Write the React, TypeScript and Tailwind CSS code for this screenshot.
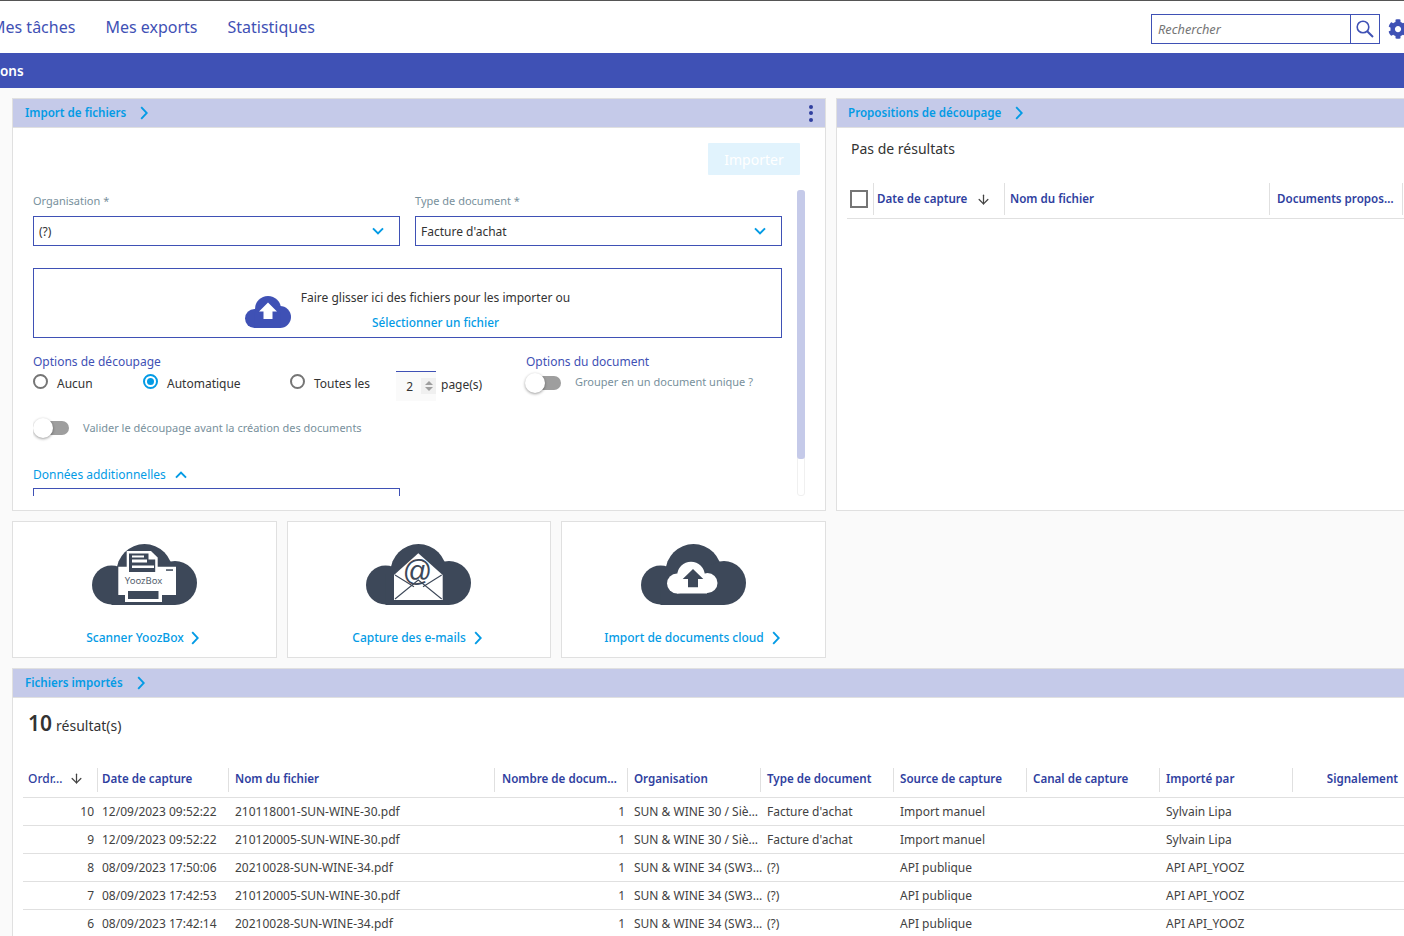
import React from "react";
import { ArrowDown } from "lucide-react";
import { FaCog } from "react-icons/fa";

function CloudBase() {
  return (
    <g fill="#3d4859">
      <circle cx="19.5" cy="41" r="19.5" />
      <circle cx="52.5" cy="28" r="28" />
      <circle cx="83" cy="39" r="22" />
      <rect x="19.5" y="30" width="63.5" height="31" />
    </g>
  );
}

function ChevronRight({ className = "" }: { className?: string }) {
  return (
    <svg width="8" height="14" viewBox="0 0 8 14" fill="none" className={className}>
      <path d="M1.2 1.2 6.8 7 1.2 12.8" stroke="#039be5" strokeWidth="1.9" />
    </svg>
  );
}

function ChevronV({ up = false }: { up?: boolean }) {
  return (
    <svg width="12" height="8" viewBox="0 0 12 8" fill="none">
      <path d={up ? "M1 6.6 6 1.6 11 6.6" : "M1 1.4 6 6.4 11 1.4"} stroke="#039be5" strokeWidth="2" />
    </svg>
  );
}

function PanelHeader({ title, gap, menu, pad = "pl-3" }: { title: string; gap: string; menu?: boolean; pad?: string }) {
  return (
    <div className={`flex h-[29px] shrink-0 items-center border-b border-[#e0e0e0] bg-[#c5cae9] pr-3 ${pad}`}>
      <span className="text-[11.6px] font-semibold text-[#039be5]">{title}</span>
      <ChevronRight className={gap} />
      {menu && (
        <span className="ml-auto flex flex-col gap-[2.5px] pr-[0.5px]">
          <i className="block h-[4px] w-[4px] rounded-full bg-[#303f9f]" />
          <i className="block h-[4px] w-[4px] rounded-full bg-[#303f9f]" />
          <i className="block h-[4px] w-[4px] rounded-full bg-[#303f9f]" />
        </span>
      )}
    </div>
  );
}

function Field({ label, value }: { label: string; value: string }) {
  return (
    <div className="w-[367px]">
      <div className="mb-[7px] h-[16px] text-[11px] leading-[16px] text-[#78909c]">{label}</div>
      <div className="flex h-[30px] items-center justify-between border border-[#3f51b5] pl-[5px] pr-[15px] text-[12px] text-[#333]">
        <span className="pt-[1px]">{value}</span>
        <ChevronV />
      </div>
    </div>
  );
}

function Radio({ label, on, className }: { label: string; on?: boolean; className: string }) {
  return (
    <div className={`flex items-start ${className}`}>
      <span className={`mt-[0.5px] flex h-[15px] w-[15px] items-center justify-center rounded-full border-2 ${on ? "border-[#039be5]" : "border-[#757575]"}`}>
        {on && <i className="block h-[7px] w-[7px] rounded-full bg-[#039be5]" />}
      </span>
      <span className="ml-[9px] mt-[2px] text-[12px] leading-[18px] text-[#333]">{label}</span>
    </div>
  );
}

function Toggle() {
  return (
    <span className="relative block h-[20px] w-[36px] shrink-0">
      <i className="absolute left-[9px] top-[3px] block h-[14px] w-[27px] rounded-full bg-[#9e9e9e]" />
      <i className="absolute left-0 top-0 block h-[20px] w-[20px] rounded-full bg-white shadow-[0_1px_3px_rgba(0,0,0,0.4)]" />
    </span>
  );
}

function CloudUpload() {
  return (
    <svg width="105" height="61" viewBox="0 0 105 61">
      <CloudBase />
      <g fill="#fff">
        <circle cx="36" cy="39.5" r="10" />
        <circle cx="50" cy="31.5" r="13.8" />
        <circle cx="66.5" cy="39" r="10" />
        <rect x="36" y="32" width="30" height="17.5" />
      </g>
      <path d="M52 25 62.3 35H57V43.3H47V35H41.7Z" fill="#3d4859" />
    </svg>
  );
}

function CloudMail() {
  return (
    <svg width="105" height="61" viewBox="0 0 105 61" className="mr-[2px]">
      <CloudBase />
      <path d="M28 31 52.3 9.3 76.7 31V56H28Z" fill="#fff" />
      <path d="M29 31 48 42.7M75.7 31 57 42.7M29 55 52.3 36 75.7 55" fill="none" stroke="#3d4859" strokeWidth="1.1" />
      <text x="51" y="36.5" textAnchor="middle" fontFamily="'Liberation Sans', sans-serif" fontStyle="italic" fontSize="29" fill="#3d4859">@</text>
    </svg>
  );
}

function CloudBox() {
  return (
    <svg width="105" height="61" viewBox="0 0 105 61">
      <CloudBase />
      <path d="M26.3 22.7H84V51H26.3Z" fill="#fff" />
      <path d="M74 25.3H81V26.8H74Z" fill="#3d4859" />
      <path d="M34.7 29V7H59L65.7 13.5V29Z" fill="#fff" />
      <path d="M37 28V9.5H56.5V15.5H63.2V28Z" fill="#3d4859" />
      <path d="M40 15.5H55V18.5H40ZM40 21.5H62V24H40ZM40 11.5H52V13.5H40Z" fill="#fff" />
      <path d="M33 46H70V58H33Z" fill="#fff" />
      <path d="M36 47H66.5V55H36Z" fill="#3d4859" />
      <text x="51.5" y="39.5" textAnchor="middle" fontFamily="'Noto Sans', sans-serif" fontSize="9.5" fill="#555f6e">YoozBox</text>
    </svg>
  );
}

function Card({ title, icon, w, gap, pad }: { title: string; icon: React.ReactNode; w: string; gap: string; pad: string }) {
  return (
    <div className={`flex flex-col items-center border border-[#e0e0e0] bg-white pt-[22px] ${w}`}>
      {icon}
      <div className={`mt-[24px] flex items-center ${pad}`}>
        <span className="text-[12px] font-medium text-[#039be5]">{title}</span>
        <ChevronRight className={gap} />
      </div>
    </div>
  );
}

const gridCols = "grid grid-cols-[74px_131px_266px_133px_133px_133px_133px_133px_133px_112px]";

const headers: [string, string][] = [
  ["Date de capture", "pl-[4px]"],
  ["Nom du fichier", "pl-[6px]"],
  ["Nombre de docum…", "pl-[7px]"],
  ["Organisation", "pl-[6px]"],
  ["Type de document", "pl-[6px]"],
  ["Source de capture", "pl-[6px]"],
  ["Canal de capture", "pl-[6px]"],
  ["Importé par", "pl-[6px]"],
];

const rows = [
  ["10", "12/09/2023 09:52:22", "210118001-SUN-WINE-30.pdf", "SUN & WINE 30 / Siè…", "Facture d'achat", "Import manuel", "Sylvain Lipa"],
  ["9", "12/09/2023 09:52:22", "210120005-SUN-WINE-30.pdf", "SUN & WINE 30 / Siè…", "Facture d'achat", "Import manuel", "Sylvain Lipa"],
  ["8", "08/09/2023 17:50:06", "20210028-SUN-WINE-34.pdf", "SUN & WINE 34 (SW3…", "(?)", "API publique", "API API_YOOZ"],
  ["7", "08/09/2023 17:42:53", "210120005-SUN-WINE-30.pdf", "SUN & WINE 34 (SW3…", "(?)", "API publique", "API API_YOOZ"],
  ["6", "08/09/2023 17:42:14", "20210028-SUN-WINE-34.pdf", "SUN & WINE 34 (SW3…", "(?)", "API publique", "API API_YOOZ"],
];

export default function App() {
  return (
    <div className="flex h-[936px] w-[1404px] flex-col overflow-hidden bg-[#fafafa] font-['Noto_Sans',sans-serif]">
      <header className="flex h-[53px] shrink-0 items-center border-t border-[#555] bg-white">
        <nav className="-ml-[9px] flex gap-[30px] text-[16px] text-[#3f51b5]">
          <span>Mes tâches</span>
          <span>Mes exports</span>
          <span>Statistiques</span>
        </nav>
        <div className="ml-auto mt-[4px] flex items-center">
          <div className="flex h-[30px] w-[229px] border border-[#3f51b5]">
            <span className="flex-1 pl-[6px] text-[12.8px] italic leading-[28px] text-[#757575]">Rechercher</span>
            <span className="flex w-[29px] items-center justify-center border-l border-[#3f51b5]">
              <svg width="18" height="18" viewBox="0 0 18 18" fill="none" stroke="#3f51b5" strokeWidth="1.6">
                <circle cx="7" cy="7" r="5.8" />
                <path d="M11.2 11.2 17 17" strokeWidth="2" />
              </svg>
            </span>
          </div>
          <FaCog size={20} color="#3f51b5" className="ml-[8px] -mr-[4px]" />
        </div>
      </header>

      <div className="flex h-[35px] shrink-0 items-center bg-[#3f51b5] pt-[2px] text-[13.5px] font-semibold text-white">ons</div>

      <main className="flex flex-col gap-[10px] pl-[12px] pt-[10px]">
        <div className="flex gap-[10px]">
          <div className="flex w-[814px] shrink-0 flex-col gap-[10px]">
            <section className="flex h-[413px] flex-col border border-[#e0e0e0] bg-white">
              <PanelHeader title="Import de fichiers" gap="ml-[14px]" menu />
              <div className="flex justify-end pr-[25px] pt-[15px]">
                <span className="flex h-[32px] w-[92px] items-center justify-center rounded-[1px] bg-[#e1f3fd] text-[14px] text-white">Importer</span>
              </div>
              <div className="flex h-[306px] pl-[20px] pt-[15px]">
                <div className="h-[306px] w-[749px] overflow-hidden pt-[3px]">
                  <div className="flex justify-between">
                    <Field label="Organisation *" value="(?)" />
                    <Field label="Type de document *" value="Facture d'achat" />
                  </div>
                  <div className="mt-[22px] flex h-[70px] items-start justify-center border border-[#3f51b5]">
                    <svg width="46" height="32" viewBox="0 0 46 32" className="mt-[27px]">
                      <g fill="#3f51b5">
                        <circle cx="9.5" cy="22.5" r="9.5" />
                        <circle cx="23" cy="13" r="13" />
                        <circle cx="35" cy="21" r="11" />
                        <rect x="9.5" y="16" width="26" height="16" />
                      </g>
                      <path d="M23 6.5 32 15.5H27.5V23H18.5V15.5H14Z" fill="#fff" />
                    </svg>
                    <div className="ml-[10px] flex flex-col items-center pt-[20px] text-[12px]">
                      <span className="leading-[18px] text-[#333]">Faire glisser ici des fichiers pour les importer ou</span>
                      <span className="mt-[6px] text-[11.8px] font-medium leading-[18px] text-[#039be5]">Sélectionner un fichier</span>
                    </div>
                  </div>
                  <div className="mt-[15px] flex">
                    <div className="w-[493px] shrink-0">
                      <div className="text-[12px] leading-[17px] text-[#3f51b5]">Options de découpage</div>
                      <div className="flex h-[30px] items-start">
                        <Radio label="Aucun" className="mt-[3px] w-[110px]" />
                        <Radio on label="Automatique" className="mt-[3px] w-[147px]" />
                        <Radio label="Toutes les" className="mt-[3px] w-[106px]" />
                        <div className="mt-[1px] flex h-[30px] w-[40px] border-t border-[#3f51b5] bg-[#fafafa]">
                          <span className="w-[25px] pr-[8px] text-right text-[12px] leading-[29px] text-[#333]">2</span>
                          <span className="mt-[6px] flex h-[16px] w-[15px] flex-col items-center justify-center gap-[2px] bg-[#f0f0f0]">
                            <i className="block h-0 w-0 border-x-[4px] border-b-[4px] border-x-transparent border-b-[#9e9e9e]" />
                            <i className="block h-0 w-0 border-x-[4px] border-t-[4px] border-x-transparent border-t-[#9e9e9e]" />
                          </span>
                        </div>
                        <span className="ml-[5px] mt-[6px] text-[12px] leading-[18px] text-[#333]">page(s)</span>
                      </div>
                    </div>
                    <div>
                      <div className="text-[12px] leading-[17px] text-[#3f51b5]">Options du document</div>
                      <div className="-ml-[1px] mt-[3px] flex items-center">
                        <Toggle />
                        <span className="-mt-[2px] ml-[14px] text-[11px] text-[#78909c]">Grouper en un document unique ?</span>
                      </div>
                    </div>
                  </div>
                  <div className="mt-[18px] flex items-center">
                    <Toggle />
                    <span className="ml-[14px] text-[11px] text-[#78909c]">Valider le découpage avant la création des documents</span>
                  </div>
                  <div className="mt-[28px] flex items-center">
                    <span className="text-[12px] leading-[17px] text-[#039be5]">Données additionnelles</span>
                    <span className="ml-[9px] flex"><ChevronV up /></span>
                  </div>
                  <div className="mt-[5px] h-[30px] w-[367px] border border-[#3f51b5]" />
                </div>
                <div className="ml-[15px] flex h-[306px] w-[8px] flex-col rounded-[3px] border border-[#f0f0f0]">
                  <div className="-mx-px -mt-px h-[269px] shrink-0 rounded-[3px] bg-[#c5cae9]" />
                </div>
              </div>
            </section>
            <div className="flex h-[137px] gap-[10px]">
              <Card title="Scanner YoozBox" icon={<CloudBox />} w="w-[265px]" gap="ml-[7px]" pad="pr-[4px]" />
              <Card title="Capture des e-mails" icon={<CloudMail />} w="w-[264px]" gap="ml-[8px]" pad="pr-[4px]" />
              <Card title="Import de documents cloud" icon={<CloudUpload />} w="w-[265px]" gap="ml-[8px]" pad="pr-[3px]" />
            </div>
          </div>

          <section className="flex h-[413px] w-[620px] shrink-0 flex-col border border-[#e0e0e0] bg-white">
            <PanelHeader title="Propositions de découpage" gap="ml-[14px]" pad="pl-[11px]" />
            <div className="pl-[14px] pt-[11px] text-[14px] leading-[20px] text-[#333]">Pas de résultats</div>
            <div className="ml-[10px] mt-[20px] grid h-[40px] grid-cols-[26px_131px_265px_134px] items-start border-b border-[#e0e0e0] text-[11.6px] font-semibold text-[#303f9f]">
              <span className="ml-[3px] mt-[11px] block h-[18px] w-[18px] border-2 border-[#757575]" />
              <div className="mt-[4px] flex h-[32px] items-center border-l border-[#e0e0e0] pl-[3px]">
                <span>Date de capture</span>
                <ArrowDown size={15} color="#444" className="ml-[9px]" />
              </div>
              <div className="mt-[4px] flex h-[32px] items-center border-l border-[#e0e0e0] pl-[5px]">Nom du fichier</div>
              <div className="mt-[4px] flex h-[32px] items-center whitespace-nowrap border-x border-[#e0e0e0] pl-[7px]">Documents propos…</div>
            </div>
          </section>
        </div>

        <section className="h-[268px] w-[1420px] border-l border-t border-[#e0e0e0] bg-white">
          <PanelHeader title="Fichiers importés" gap="ml-[14px]" />
          <div className="flex items-baseline pl-[15px] pt-[8px] text-[#333]">
            <span className="text-[21px] font-semibold leading-[34px]">10</span>
            <span className="ml-[4px] text-[14px]">résultat(s)</span>
          </div>
          <div className="ml-[10px] mt-[28px]">
            <div className={`${gridCols} h-[30px] items-start border-b border-[#e0e0e0] text-[11.6px] font-semibold text-[#303f9f]`}>
              <div className="flex h-[24px] items-center pb-[3px] pl-[5px]">
                <span className="font-medium text-[12px]">Ordr…</span>
                <ArrowDown size={15} color="#444" className="ml-[6px]" />
              </div>
              {headers.map(([h, p]) => (
                <div key={h} className={`flex h-[24px] items-center whitespace-nowrap border-l border-[#e0e0e0] pb-[3px] ${p}`}>{h}</div>
              ))}
              <div className="flex h-[24px] items-center justify-end border-l border-[#e0e0e0] pb-[3px] pr-[6px]">Signalement</div>
            </div>
            {rows.map((r, i) => (
              <div key={i} className={`${gridCols} h-[28px] items-center whitespace-nowrap border-b border-[#e0e0e0] text-[12px] text-[#424242]`}>
                <span className="pr-[3px] text-right">{r[0]}</span>
                <span className="pl-[5px]">{r[1]}</span>
                <span className="pl-[7px]">{r[2]}</span>
                <span className="pr-[2px] text-right">1</span>
                <span className="pl-[7px]">{r[3]}</span>
                <span className="pl-[7px]">{r[4]}</span>
                <span className="pl-[7px]">{r[5]}</span>
                <span />
                <span className="pl-[7px]">{r[6]}</span>
                <span />
              </div>
            ))}
          </div>
        </section>
      </main>
    </div>
  );
}
